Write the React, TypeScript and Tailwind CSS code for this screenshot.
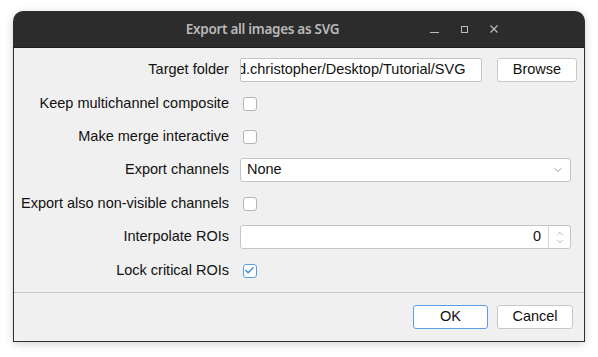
import { ChevronDown, ChevronUp, Check } from "lucide-react";

const Box = ({ checked }: { checked?: boolean }) => (
  <div
    className={`ml-[3px] w-[14px] h-[14px] rounded-[3px] border bg-white flex items-center justify-center ${
      checked ? "border-[#5b9ee6]" : "border-[#b4b4b4]"
    }`}
  >
    {checked && <Check className="w-[11px] h-[11px] text-[#4a90e2]" strokeWidth={3.5} />}
  </div>
);

const Label = ({ children }: { children: string }) => (
  <div className="h-[23px] flex items-center justify-end whitespace-nowrap">{children}</div>
);

export default function App() {
  return (
    <div className="w-[598px] h-[357px] bg-white pt-[11px] pl-[13px]">
      <div
        className="w-[572px] rounded-t-[10px] overflow-hidden shadow-[0_2px_10px_rgba(0,0,0,0.18)] text-[14.5px] text-[#111]"
        style={{ fontFamily: '"Liberation Sans", Arial, sans-serif' }}
      >
        {/* barra de título */}
        <div className="h-[37px] bg-[#2c2c2c] flex items-center border-b border-[#1e1e1e]">
          <div
            className="w-[499px] text-center text-[13.5px] font-semibold tracking-[-0.3px] text-[#b8b8b8] pt-[1px]"
            style={{ fontFamily: '"Noto Sans", sans-serif' }}
          >
            Export all images as SVG
          </div>
          <div className="flex items-center">
            <div className="w-[9px] h-[1px] bg-[#bdbdbd] mt-[7px] ml-[-82px]" />
            <div className="w-[7px] h-[7px] border border-[#bdbdbd] ml-[22px]" />
            <svg className="ml-[22px]" width="8" height="8" viewBox="0 0 8 8">
              <path d="M0.5 0.5L7.5 7.5M7.5 0.5L0.5 7.5" stroke="#bdbdbd" strokeWidth="1.2" />
            </svg>
          </div>
        </div>

        {/* contenido */}
        <div className="bg-[#f0f0f0] border-x border-b border-[#2e2e2e]">
          <div className="grid grid-cols-[auto_1fr] gap-x-[11px] gap-y-[10px] pt-[10px] pb-[10px] pl-[7px] pr-[13px] items-center">
            <Label>Target folder</Label>
            <div className="flex gap-[15px] mr-[-7px]">
              <div className="w-[242px] h-[24px] bg-white border border-[#c4c4c4] rounded-[2px] overflow-hidden flex items-center">
                <span className="whitespace-nowrap ml-[-3px]">d.christopher/Desktop/Tutorial/SVG</span>
              </div>
              <button className="w-[80px] h-[24px] bg-white border border-[#c8c8c8] rounded-[3px]">Browse</button>
            </div>

            <Label>Keep multichannel composite</Label>
            <Box />

            <Label>Make merge interactive</Label>
            <Box />

            <Label>Export channels</Label>
            <div className="h-[24px] bg-white border border-[#c4c4c4] rounded-[3px] flex items-center justify-between pl-[6px] pr-[6px]">
              <span>None</span>
              <ChevronDown className="w-[12px] h-[12px] text-[#777]" strokeWidth={1.5} />
            </div>

            <Label>Export also non-visible channels</Label>
            <Box />

            <Label>Interpolate ROIs</Label>
            <div className="h-[24px] bg-white border border-[#c4c4c4] rounded-[3px] flex items-center">
              <span className="flex-1 text-right pr-[7px]">0</span>
              <div className="w-[22px] h-full border-l border-[#d4d4d4] flex flex-col items-center justify-center">
                <ChevronUp className="w-[12px] h-[9px] text-[#777] -mb-[1px]" strokeWidth={1.5} />
                <ChevronDown className="w-[12px] h-[9px] text-[#777]" strokeWidth={1.5} />
              </div>
            </div>

            <Label>Lock critical ROIs</Label>
            <Box checked />
          </div>

          <div className="border-t border-[#c8c8c8] flex justify-end gap-[9px] pt-[12px] pb-[12px] pr-[11px]">
            <button className="w-[75px] h-[24px] bg-white border border-[#5b9ee6] rounded-[3px]">OK</button>
            <button className="w-[76px] h-[24px] bg-white border border-[#c8c8c8] rounded-[3px]">Cancel</button>
          </div>
        </div>
      </div>
    </div>
  );
}
